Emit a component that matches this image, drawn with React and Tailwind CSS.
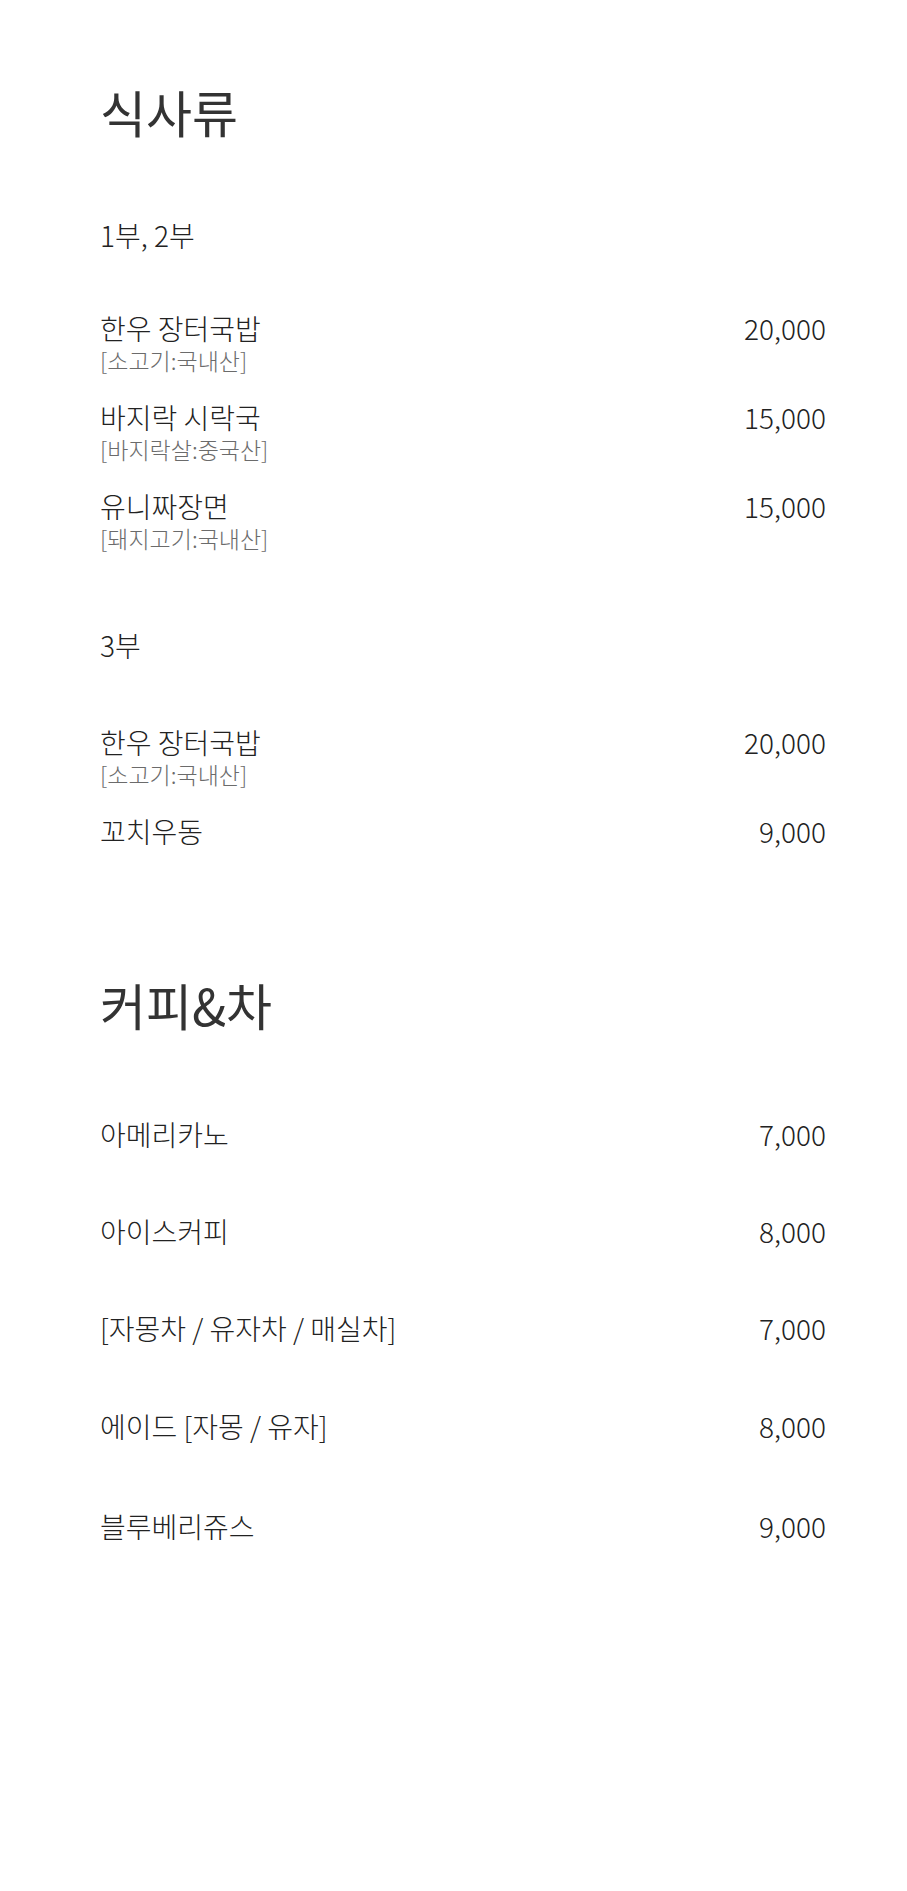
const meals = [
  {
    title: "1부, 2부",
    items: [
      { name: "한우 장터국밥", origin: "[소고기:국내산]", price: "20,000" },
      { name: "바지락 시락국", origin: "[바지락살:중국산]", price: "15,000" },
      { name: "유니짜장면", origin: "[돼지고기:국내산]", price: "15,000" },
    ],
  },
  {
    title: "3부",
    items: [
      { name: "한우 장터국밥", origin: "[소고기:국내산]", price: "20,000" },
      { name: "꼬치우동", price: "9,000" },
    ],
  },
];

const drinks = [
  { name: "아메리카노", price: "7,000", space: "" },
  { name: "아이스커피", price: "8,000", space: "mt-[63px]" },
  { name: "[자몽차 / 유자차 / 매실차]", price: "7,000", space: "mt-[63px]" },
  { name: "에이드 [자몽 / 유자]", price: "8,000", space: "mt-[64px]" },
  { name: "블루베리쥬스", price: "9,000", space: "mt-[66px]" },
];

function MenuItem({ item }) {
  return (
    <div className={"flex justify-between " + (item.space || "")}>
      <div>
        <p className="text-[28px] leading-[34px] font-light text-[#222]">{item.name}</p>
        {item.origin && (
          <p className="text-[23px] leading-[30px] font-light text-[#6b6b6b]">{item.origin}</p>
        )}
      </div>
      <p className="text-[28px] leading-[34px] font-light text-[#222]">{item.price}</p>
    </div>
  );
}

export default function App() {
  return (
    <div
      className="min-h-[1891px] bg-white pl-[100px] pr-[81px] pt-[83px]"
      style={{ fontFamily: '"Noto Sans CJK KR", "Noto Sans", sans-serif' }}
    >
      {/* 식사류 */}
      <h2 className="text-[50px] leading-[56px] text-[#333]">식사류</h2>

      {meals.map((group, gi) => (
        <section key={gi} className={gi === 0 ? "mt-[78px]" : "mt-[74px]"}>
          <h3 className="text-[28px] leading-[36px] font-light text-[#222]">{group.title}</h3>
          <div className={(gi === 0 ? "mt-[58px]" : "mt-[62px]") + " flex flex-col gap-[25px]"}>
            {group.items.map((item, i) => (
              <MenuItem key={i} item={item} />
            ))}
          </div>
        </section>
      ))}

      {/* 커피&차 */}
      <h2 className="mt-[128px] text-[50px] leading-[56px] text-[#333]">커피&amp;차</h2>

      <div className="mt-[85px] flex flex-col">
        {drinks.map((item, i) => (
          <MenuItem key={i} item={item} />
        ))}
      </div>
    </div>
  );
}
